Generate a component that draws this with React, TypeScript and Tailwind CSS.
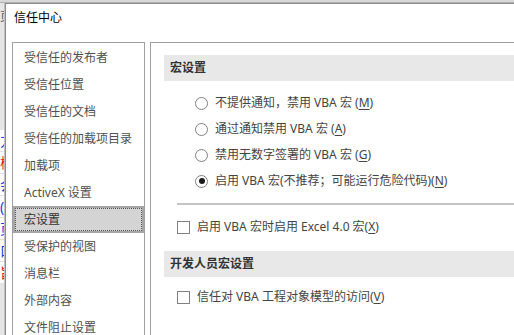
import React from "react";

const font = { fontFamily: '"Noto Sans", "Noto Sans CJK SC", "Liberation Sans", sans-serif' };

const navItems = [
  "受信任的发布者",
  "受信任位置",
  "受信任的文档",
  "受信任的加载项目录",
  "加载项",
  "ActiveX 设置",
  "宏设置",
  "受保护的视图",
  "消息栏",
  "外部内容",
  "文件阻止设置",
];

function Radio({ checked }: { checked?: boolean }) {
  return (
    <span className="w-[13px] h-[13px] rounded-full border border-[#808080] bg-white flex items-center justify-center shrink-0">
      {checked && <span className="w-[6px] h-[6px] rounded-full bg-[#1a1a1a]" />}
    </span>
  );
}

function Check() {
  return <span className="w-[13px] h-[13px] border border-[#808080] bg-white shrink-0" />;
}

function U({ c }: { c: string }) {
  return <span className="underline underline-offset-2">{c}</span>;
}

export default function App() {
  const radios: React.ReactNode[] = [
    <>不提供通知，禁用 VBA 宏 (<U c="M" />)</>,
    <>通过通知禁用 VBA 宏 (<U c="A" />)</>,
    <>禁用无数字签署的 VBA 宏 (<U c="G" />)</>,
    <>启用 VBA 宏(不推荐；可能运行危险代码)(<U c="N" />)</>,
  ];
  const leftChars: [string, string][] = [
    ["力", "text-[#1a3cd8]"],
    ["棒", "text-[#e01010]"],
    ["会", "text-[#1a3cd8]"],
    ["(", "text-[#1a3cd8]"],
    ["页", "text-[#1a3cd8]"],
    ["口", "text-[#1a3cd8]"],
    ["旨", "text-[#e01010]"],
  ];
  return (
    <div className="w-[514px] h-[335px] overflow-hidden bg-[#e4e4e4] flex flex-col" style={font}>
      <div className="h-[3px] shrink-0 bg-[#d8d8d8] border-b border-[#b0b0b0]" />
      <div className="flex flex-1 min-h-0">
        <div className="w-[5px] shrink-0 flex flex-col overflow-hidden border-r border-[#c0c0c0]">
          <div className="h-[127px] shrink-0 bg-[#e6e6e6] text-[12px] leading-[16px] text-[#555] pt-[6px] whitespace-nowrap">页</div>
          <div className="flex flex-col bg-white">
            {leftChars.map(([c, cls], i) => (
              <div key={i} className={`h-[22px] shrink-0 text-[14px] leading-[22px] whitespace-nowrap border-b border-[#e0e0e0] ${cls}`}>
                {c}
              </div>
            ))}
          </div>
          <div className="flex-1 bg-[#e6e6e6]" />
        </div>
        <div className="flex-1 min-w-0 bg-white border-l border-t border-[#8c8c8c] flex flex-col">
          <div className="h-[38px] shrink-0 pl-[8px] pt-[6px] text-[12px] leading-[16px] text-black">信任中心</div>
          <div className="flex flex-1 min-h-0 pl-[6px] gap-[5px]">
            <div className="w-[133px] shrink-0 border-l border-t border-r border-[#a0a0a0] pt-[1px] flex flex-col">
              {navItems.map((t) =>
                t === "宏设置" ? (
                  <div key={t} className="h-[27px] shrink-0 flex items-stretch">
                    <div className="flex-1 border-2 border-[#a6a6a6] bg-[#d4d4d4] flex items-center">
                      <div className="flex-1 h-full border border-dotted border-[#555] flex items-center pl-[8px] text-[12px] text-[#333]">
                        {t}
                      </div>
                    </div>
                  </div>
                ) : (
                  <div key={t} className="h-[27px] shrink-0 flex items-center pl-[11px] text-[12px] text-[#505050]">
                    {t}
                  </div>
                )
              )}
            </div>
            <div className="flex-1 min-w-0 border-l border-t border-[#a0a0a0] pl-[13px] pt-[12px] flex flex-col">
              <div className="h-[26px] shrink-0 bg-[#e8e8e8] flex items-center pl-[6px] text-[12px] font-bold text-[#333]">宏设置</div>
              <div className="pt-[9px] pl-[31px] flex flex-col">
                {radios.map((r, i) => (
                  <div key={i} className="h-[26px] flex items-center gap-[7px] text-[12px] text-[#444] whitespace-nowrap">
                    <Radio checked={i === 3} />
                    <span>{r}</span>
                  </div>
                ))}
              </div>
              <div className="ml-[13px] mt-[9px] h-[2px] bg-[#c4c4c4]" />
              <div className="ml-[13px] mt-[9px] h-[26px] flex items-center gap-[7px] text-[12px] text-[#444] whitespace-nowrap">
                <Check />
                <span>启用 VBA 宏时启用 Excel 4.0 宏(<U c="X" />)</span>
              </div>
              <div className="mt-[11px] h-[26px] shrink-0 bg-[#e8e8e8] flex items-center pl-[6px] text-[12px] font-bold text-[#333]">开发人员宏设置</div>
              <div className="ml-[13px] mt-[7px] h-[26px] flex items-center gap-[7px] text-[12px] text-[#444] whitespace-nowrap">
                <Check />
                <span>信任对 VBA 工程对象模型的访问(<U c="V" />)</span>
              </div>
            </div>
          </div>
        </div>
      </div>
    </div>
  );
}
